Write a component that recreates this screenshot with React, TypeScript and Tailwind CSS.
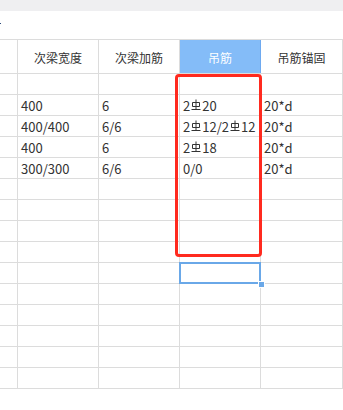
import React from "react"

const font = { fontFamily: '"Noto Sans CJK SC", "Liberation Sans", sans-serif' }

function Rebar() {
  return (
    <svg width="10" height="12" viewBox="0 0 10 12" className="inline-block align-[-1px] mx-[1px]">
      <path d="M5 0.5V10.5M1.5 3.5H8.5V7.5H1.5ZM0.5 10.5H9.5" stroke="#333" strokeWidth="1" fill="none" />
    </svg>
  )
}

const rows: React.ReactNode[][] = [
  ["", "", "", ""],
  ["400", "6", <>2<Rebar />20</>, "20*d"],
  ["400/400", "6/6", <>2<Rebar />12/2<Rebar />12</>, "20*d"],
  ["400", "6", <>2<Rebar />18</>, "20*d"],
  ["300/300", "6/6", "0/0", "20*d"],
]
while (rows.length < 15) rows.push(["", "", "", ""])

const widths = ["w-[81px]", "w-[81px]", "w-[81px]", "w-[82px]"]

export default function App() {
  return (
    <div className="relative w-[343px] h-[410px] bg-white overflow-hidden text-[12px] text-[#333]" style={font}>
      <div className="h-[11px] bg-[#efeff1]" />
      <div className="h-[28px] flex items-center">
        <div className="w-[1px] h-[1px] bg-[#2c4a7a] mt-[-3px]" />
      </div>

      {/* header */}
      <div className="flex h-[35px] border-t border-b border-[#dcdcdc]">
        <div className="w-[18px] shrink-0 border-r border-[#dcdcdc]" />
        {["次梁宽度", "次梁加筋", "吊筋", "吊筋锚固"].map((h, i) => (
          <div
            key={h}
            className={`${widths[i]} shrink-0 flex items-center justify-center pt-[3px] border-r ${
              i === 2 ? "bg-[#84bcf8] border-[#6eaaf0] text-white" : "border-[#dcdcdc]"
            }`}
          >
            {h}
          </div>
        ))}
      </div>

      {rows.map((r, ri) => (
        <div key={ri} className="flex h-[21px] border-b border-[#dcdcdc] text-[13px]">
          <div className="w-[18px] shrink-0 border-r border-[#dcdcdc]" />
          {r.map((c, ci) => (
            <div
              key={ci}
              className={`${widths[ci]} shrink-0 flex items-center pl-[3px] border-r border-[#dcdcdc] whitespace-nowrap leading-none`}
            >
              {c}
            </div>
          ))}
        </div>
      ))}

      {/* highlight box */}
      <div className="absolute left-[175px] top-[74px] w-[87px] h-[183px] border-[3px] border-[#ff2a1f] rounded-[4px]" />

      {/* selected cell */}
      <div className="absolute left-[179px] top-[262px] w-[82px] h-[22px] border-2 border-[#6aa8e8]" />
      <div className="absolute left-[258px] top-[281px] w-[5px] h-[5px] bg-[#6aa8e8] border border-white box-content" />
    </div>
  )
}
